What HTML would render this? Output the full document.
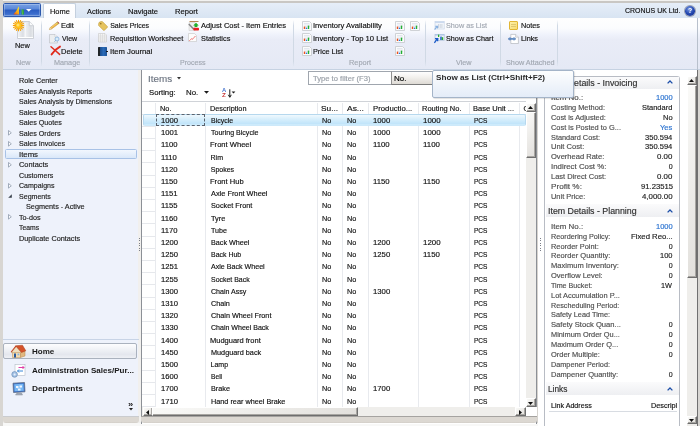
<!DOCTYPE html><html><head><meta charset="utf-8"><style>
*{margin:0;padding:0;box-sizing:border-box}
html,body{width:700px;height:426px;overflow:hidden;background:#d6d3ce;font-family:"Liberation Sans",sans-serif;position:relative}
.a{position:absolute}
svg.a{overflow:visible}
.t{position:absolute;font-size:7px;line-height:10px;white-space:nowrap;color:#111;transform-origin:0 0;filter:opacity(.999);-webkit-text-stroke:0.15px currentColor}
.g{color:#a2a8b2}
.ic-rep{position:absolute;width:10px;height:11px;border:1px solid #b4b8c0;background:linear-gradient(90deg,#fff,#eceef2);border-radius:1px}
.ic-rep i{position:absolute;bottom:1px;width:2px}
.sep{position:absolute;width:1px;background:linear-gradient(#fff0,#d0d9e5 12%,#d0d9e5 88%,#fff0)}
.btn{position:absolute;background:linear-gradient(135deg,#fafaf8,#e2e0dc);border:1px solid;border-color:#fff #6e6e6e #6e6e6e #fff;box-shadow:inset -1px -1px 0 #a8a6a2}
.trk{position:absolute;background:#efeeeb}
</style></head><body>
<div class="a" style="left:0px;top:0px;width:700px;height:1px;background:#f2f2f0"></div>
<div class="a" style="left:0px;top:1px;width:700px;height:1.5px;background:#c9c7c3"></div>
<div class="a" style="left:0px;top:0px;width:2.5px;height:426px;background:#d8d6d2"></div>
<div class="a" style="left:2.5px;top:2.5px;width:697.5px;height:15px;background:linear-gradient(#e6eef8,#d8e4f2)"></div>
<div class="a" style="left:3px;top:3.3px;width:37.8px;height:13.4px;border-radius:1.5px;background:linear-gradient(#7aa2e4,#5a88d8 42%,#2a5cc2 50%,#3a6ccc 80%,#5282d8);border:1px solid #2c58ac;box-shadow:inset 0 0 0 1px rgba(255,255,255,.25)"></div>
<svg class="a" style="left:13px;top:5.5px" width="12" height="9" viewBox="0 0 12 9"><defs><linearGradient id="sg" x1="0" y1="1" x2="0.6" y2="0"><stop offset="0" stop-color="#e83a10"/><stop offset="0.45" stop-color="#f7a012"/><stop offset="1" stop-color="#fde21a"/></linearGradient></defs><path d="M0.4 8.6 Q3.5 5 5.9 0.2 L6 8.4Z" fill="url(#sg)"/><path d="M6.9 8.4 L7.3 2 L7.7 8.4Z" fill="#3a90d8"/><path d="M8.6 8.6 L8.8 3.4 L10.8 3.6 L11 8.6Z" fill="#2ea838"/><path d="M8.8 3.4 L9.6 8.6" stroke="#7ad070" stroke-width="0.5"/></svg>
<svg class="a" style="left:26px;top:8.8px" width="6" height="3" viewBox="0 0 6 3"><path d="M0 0 H5.5 L2.75 2.8Z" fill="#fff"/></svg>
<div class="a" style="left:43px;top:3.2px;width:33.4px;height:14.6px;background:linear-gradient(#ffffff,#fbfcfe);border:1px solid #c4d0de;border-bottom:none;border-radius:2px 2px 0 0"></div>
<div class="t" style="top:6.95px;left:50.29px;transform:scaleX(1.0626);">Home</div>
<div class="t" style="top:6.95px;left:87.49px;transform:scaleX(1.0446);">Actions</div>
<div class="t" style="top:6.95px;left:128.48px;transform:scaleX(1.0882);">Navigate</div>
<div class="t" style="top:6.95px;left:175.28px;transform:scaleX(1.0841);">Report</div>
<div class="t" style="top:5.90px;left:625.15px;transform:scaleX(0.9958);">CRONUS UK Ltd.</div>
<div class="a" style="left:684.5px;top:5.5px;width:10.5px;height:10px;border-radius:50%;background:radial-gradient(circle at 42% 32%,#7a9ce4,#2448b0 50%,#162e88);box-shadow:0 0 0 1px #9aa2b4"></div><div class="t" style="top:6.01px;font-size:7.5px;font-weight:bold;-webkit-text-stroke:0;left:687.78px;transform:scaleX(0.9199);color:#fff;">?</div>
<div class="a" style="left:2.5px;top:17.5px;width:697.5px;height:52px;background:linear-gradient(#fefefe,#fbfcfe 20%,#eff2fb 33%,#e9ecf7 42%,#e5e9f5);border-bottom:1px solid #c6d2e2"></div>
<div class="a" style="left:697px;top:17.5px;width:1px;height:52px;background:#b8c0cc"></div>
<div class="sep" style="left:41.3px;top:20px;height:47px"></div>
<div class="sep" style="left:89.3px;top:20px;height:47px"></div>
<div class="sep" style="left:293.3px;top:20px;height:47px"></div>
<div class="sep" style="left:425.3px;top:20px;height:47px"></div>
<div class="sep" style="left:500.3px;top:20px;height:47px"></div>
<div class="sep" style="left:557.3px;top:20px;height:47px"></div>
<div class="a" style="left:17.7px;top:21.2px;width:16px;height:17px;background:linear-gradient(90deg,#f2f3f5,#dcdfe4 30%,#eceef1 50%,#dadde2 80%,#eef0f2);clip-path:polygon(0 0,74% 0,100% 24%,100% 100%,0 100%);box-shadow:inset 0 -1px 0 #fff"></div>
<svg class="a" style="left:17.2px;top:20.7px" width="17" height="18" viewBox="0 0 17 18"><path d="M0.5 0.5H12.3L16.5 4.7V17.5H0.5Z" fill="none" stroke="#c4c8ce" stroke-width="0.8"/><path d="M12.3 0.5V4.7H16.5" fill="#fafbfc" stroke="#c4c8ce" stroke-width="0.8"/><path d="M8.2 2V16.5" stroke="#fbfcfd" stroke-width="1"/></svg>
<svg class="a" style="left:12.8px;top:20.3px" width="11" height="11" viewBox="0 0 11 11"><g stroke="#f7a000" stroke-width="1.1" stroke-linecap="round"><path d="M5.5 0.3V10.7M0.3 5.5H10.7M1.8 1.8L9.2 9.2M9.2 1.8L1.8 9.2M3.4 0.6L7.6 10.4M7.6 0.6L3.4 10.4M0.6 3.4L10.4 7.6M0.6 7.6L10.4 3.4"/></g><circle cx="5.5" cy="5.5" r="2.9" fill="#ffc21a"/><circle cx="5" cy="5" r="1.5" fill="#ffe070"/></svg>
<div class="t" style="top:41.00px;left:15.39px;transform:scaleX(1.0561);">New</div>
<div class="t g" style="top:58.10px;left:15.90px;transform:scaleX(1.0375);">New</div>
<svg class="a" style="left:49px;top:21px" width="11" height="9" viewBox="0 0 11 9"><path d="M0.4 8.6 L1.2 6.6 L8.4 0.9 L9.9 2.5 L2.5 8 Z" fill="#f0b848" stroke="#b8842c" stroke-width="0.5"/><path d="M1.6 6.9 L8.9 1.4" stroke="#fae090" stroke-width="0.5"/><path d="M0.4 8.6 L1.2 6.6 L2.5 8Z" fill="#e8d8b8"/><path d="M8 1.2 L9.6 2.8" stroke="#48a048" stroke-width="0.7"/><path d="M8.6 0.6 L10.2 2.2" stroke="#e04868" stroke-width="1"/></svg>
<div class="t" style="top:21.05px;left:61.49px;transform:scaleX(1.0580);">Edit</div>
<svg class="a" style="left:49.3px;top:33.8px" width="11" height="9.5" viewBox="0 0 11 9.5"><path d="M0.5 0.5H6L8.5 3V9H0.5Z" fill="#eceef0" stroke="#b8bcc2" stroke-width="0.6"/><path d="M6 0.5V3H8.5" fill="#fafafa" stroke="#b8bcc2" stroke-width="0.5"/><circle cx="8" cy="5" r="2" fill="#d8ecfa" stroke="#78a8d8" stroke-width="0.7"/><path d="M6.6 6.5 L5.6 7.6" stroke="#6890c0" stroke-width="0.9"/></svg>
<div class="t" style="top:34.15px;left:62.07px;">View</div>
<svg class="a" style="left:49.6px;top:46.4px" width="11" height="9" viewBox="0 0 11 9"><path d="M1 0.8 Q4.5 3.8 9.6 8.4" stroke="#e02a1c" stroke-width="1.5" fill="none" stroke-linecap="round"/><path d="M10 0.6 Q5.5 3 1.6 8.4" stroke="#e02a1c" stroke-width="1.9" fill="none" stroke-linecap="round"/></svg>
<div class="t" style="top:46.85px;left:61.49px;transform:scaleX(1.0698);">Delete</div>
<div class="t g" style="top:58.10px;left:53.90px;transform:scaleX(1.0364);">Manage</div>
<svg class="a" style="left:98px;top:20.5px" width="10" height="9.5" viewBox="0 0 10 9.5"><path d="M0.6 3.2 Q0.6 0.6 3.2 0.6 L4.4 0.6 L9.4 5.6 Q9.7 6 9.3 6.4 L6.4 9.3 Q6 9.7 5.6 9.4 L0.6 4.4Z" fill="#e6c460" stroke="#c09a3a" stroke-width="0.6"/><circle cx="2.8" cy="2.8" r="0.8" fill="#8a6a20"/></svg>
<div class="t" style="top:21.05px;left:110.18px;">Sales Prices</div>
<svg class="a" style="left:98px;top:33px" width="9" height="9.5" viewBox="0 0 9 9.5"><path d="M0.5 0.5H7L8.5 2V9H0.5Z" fill="#f4f4f4" stroke="#c8c8c8" stroke-width="0.6"/><path d="M0.5 3H8.5M0.5 5H8.5M0.5 7H8.5M2.5 0.5V9M4.5 0.5V9M6.5 0.5V9" stroke="#d0d0d0" stroke-width="0.5"/></svg>
<div class="t" style="top:34.15px;left:109.90px;transform:scaleX(1.0475);">Requisition Worksheet</div>
<div class="a" style="left:98.2px;top:47.1px;width:8.6px;height:8.9px;background:linear-gradient(90deg,#202428 0 1.6px,#1a4a88 1.6px,#2a6ab8 60%,#1c5296);border-radius:0.5px"></div>
<div class="a" style="left:105.6px;top:50.6px;width:2px;height:1.6px;background:#1a1a1a"></div>
<div class="t" style="top:46.85px;left:109.79px;transform:scaleX(1.0988);">Item Journal</div>
<svg class="a" style="left:188.3px;top:20.5px" width="12" height="10" viewBox="0 0 12 10"><rect x="1.5" y="0" width="9" height="0.9" fill="#b07840"/><path d="M1 1.5H7V9.5H1Z" fill="#f0f0f0" stroke="#c8c8c8" stroke-width="0.5"/><path d="M0.8 3 L5.8 8.2" stroke="#888" stroke-width="1.6"/><path d="M5.2 4.6 L8 1.8 L10.8 4.6 H9.4 V6 H6.6 V4.6Z" fill="#1eb02a"/><rect x="5.4" y="6.8" width="5.6" height="2.8" rx="0.8" fill="#e82020"/></svg>
<div class="t" style="top:21.05px;left:201.49px;transform:scaleX(1.0709);">Adjust Cost - Item Entries</div>
<svg class="a" style="left:188.4px;top:33.4px" width="9" height="9" viewBox="0 0 9 9"><path d="M0.5 0.5H6.5L8.5 2.5V8.5H0.5Z" fill="#fcfcfc" stroke="#c4c4c4" stroke-width="0.6"/><path d="M1.5 7.5 L3.5 5.8 L4.5 6.2 L7.5 3" stroke="#e82828" stroke-width="0.9" stroke-dasharray="1.2 0.4" fill="none"/></svg>
<div class="t" style="top:34.15px;left:201.17px;transform:scaleX(1.0461);">Statistics</div>
<div class="t g" style="top:58.10px;left:179.92px;transform:scaleX(1.0099);">Process</div>
<svg class="a" style="left:301.8px;top:20.7px" width="10" height="10" viewBox="0 0 10 10"><path d="M0.5 0.5H7.5L9.5 2.5V9.5H0.5Z" fill="#fbfbfc" stroke="#c4c8cc" stroke-width="0.8"/><path d="M2 2.5H7.5M2 4H8M2 5.5H8" stroke="#d4dae6" stroke-width="0.6"/><rect x="1.8" y="5.6" width="1.4" height="2.4" fill="#f0501a"/><rect x="3.8" y="6.6" width="1.4" height="1.4" fill="#2a78e0"/><rect x="5.8" y="4.6" width="1.4" height="3.4" fill="#22b030"/></svg>
<svg class="a" style="left:301.8px;top:33.4px" width="10" height="10" viewBox="0 0 10 10"><path d="M0.5 0.5H7.5L9.5 2.5V9.5H0.5Z" fill="#fbfbfc" stroke="#c4c8cc" stroke-width="0.8"/><path d="M2 2.5H7.5M2 4H8M2 5.5H8" stroke="#d4dae6" stroke-width="0.6"/><rect x="1.8" y="5.6" width="1.4" height="2.4" fill="#f0501a"/><rect x="3.8" y="6.6" width="1.4" height="1.4" fill="#2a78e0"/><rect x="5.8" y="4.6" width="1.4" height="3.4" fill="#22b030"/></svg>
<svg class="a" style="left:301.8px;top:46.4px" width="10" height="10" viewBox="0 0 10 10"><path d="M0.5 0.5H7.5L9.5 2.5V9.5H0.5Z" fill="#fbfbfc" stroke="#c4c8cc" stroke-width="0.8"/><path d="M2 2.5H7.5M2 4H8M2 5.5H8" stroke="#d4dae6" stroke-width="0.6"/><rect x="1.8" y="5.6" width="1.4" height="2.4" fill="#f0501a"/><rect x="3.8" y="6.6" width="1.4" height="1.4" fill="#2a78e0"/><rect x="5.8" y="4.6" width="1.4" height="3.4" fill="#22b030"/></svg>
<svg class="a" style="left:395px;top:20.7px" width="10" height="10" viewBox="0 0 10 10"><path d="M0.5 0.5H7.5L9.5 2.5V9.5H0.5Z" fill="#fbfbfc" stroke="#c4c8cc" stroke-width="0.8"/><path d="M2 2.5H7.5M2 4H8M2 5.5H8" stroke="#d4dae6" stroke-width="0.6"/><rect x="1.8" y="5.6" width="1.4" height="2.4" fill="#f0501a"/><rect x="3.8" y="6.6" width="1.4" height="1.4" fill="#2a78e0"/><rect x="5.8" y="4.6" width="1.4" height="3.4" fill="#22b030"/></svg>
<svg class="a" style="left:409.8px;top:20.7px" width="10" height="10" viewBox="0 0 10 10"><path d="M0.5 0.5H7.5L9.5 2.5V9.5H0.5Z" fill="#fbfbfc" stroke="#c4c8cc" stroke-width="0.8"/><path d="M2 2.5H7.5M2 4H8M2 5.5H8" stroke="#d4dae6" stroke-width="0.6"/><rect x="1.8" y="5.6" width="1.4" height="2.4" fill="#f0501a"/><rect x="3.8" y="6.6" width="1.4" height="1.4" fill="#2a78e0"/><rect x="5.8" y="4.6" width="1.4" height="3.4" fill="#22b030"/></svg>
<svg class="a" style="left:395px;top:33.4px" width="10" height="10" viewBox="0 0 10 10"><path d="M0.5 0.5H7.5L9.5 2.5V9.5H0.5Z" fill="#fbfbfc" stroke="#c4c8cc" stroke-width="0.8"/><path d="M2 2.5H7.5M2 4H8M2 5.5H8" stroke="#d4dae6" stroke-width="0.6"/><rect x="1.8" y="5.6" width="1.4" height="2.4" fill="#f0501a"/><rect x="3.8" y="6.6" width="1.4" height="1.4" fill="#2a78e0"/><rect x="5.8" y="4.6" width="1.4" height="3.4" fill="#22b030"/></svg>
<svg class="a" style="left:395px;top:46.4px" width="10" height="10" viewBox="0 0 10 10"><path d="M0.5 0.5H7.5L9.5 2.5V9.5H0.5Z" fill="#fbfbfc" stroke="#c4c8cc" stroke-width="0.8"/><path d="M2 2.5H7.5M2 4H8M2 5.5H8" stroke="#d4dae6" stroke-width="0.6"/><rect x="1.8" y="5.6" width="1.4" height="2.4" fill="#f0501a"/><rect x="3.8" y="6.6" width="1.4" height="1.4" fill="#2a78e0"/><rect x="5.8" y="4.6" width="1.4" height="3.4" fill="#22b030"/></svg>
<div class="t" style="top:21.05px;left:312.80px;transform:scaleX(1.0879);">Inventory Availability</div>
<div class="t" style="top:34.15px;left:312.79px;transform:scaleX(1.0921);">Inventory - Top 10 List</div>
<div class="t" style="top:46.85px;left:312.90px;transform:scaleX(1.0405);">Price List</div>
<div class="t g" style="top:58.10px;left:349.49px;transform:scaleX(1.0547);">Report</div>
<svg class="a" style="left:434px;top:20.5px" width="11" height="9" viewBox="0 0 11 9"><rect x="1" y="0.5" width="9.2" height="7.5" fill="#f2f5fa" stroke="#c4d2e6" stroke-width="0.6"/><rect x="1" y="0.5" width="9.2" height="1.4" fill="#c8d8ee"/><path d="M4.5 3V7M6.2 3V7M7.9 3V7" stroke="#c0c8d4" stroke-width="0.7"/><path d="M0.6 8.6 L2.8 5.6 M1.2 5.2 L3.6 5.2 L3.4 7.4" stroke="#88b0e0" stroke-width="1.1" fill="none"/></svg>
<div class="t g" style="top:21.05px;left:445.77px;transform:scaleX(1.0352);">Show as List</div>
<svg class="a" style="left:434px;top:33.5px" width="11" height="9" viewBox="0 0 11 9"><rect x="1" y="0.3" width="9.2" height="6" fill="#eef2f8" stroke="#a8bcd8" stroke-width="0.6"/><rect x="1" y="0.3" width="9.2" height="1.2" fill="#a8c0e4"/><rect x="4" y="0.6" width="1.2" height="2.4" fill="#28b028"/><rect x="6.2" y="2.6" width="1.6" height="3.4" fill="#2a62c8"/><rect x="7.8" y="3.2" width="1.4" height="2.8" fill="#28b028"/><path d="M0.4 8.8 L3 5.2 M1 4.6 L3.8 4.6 L3.6 7.2" stroke="#1a5ac8" stroke-width="1.3" fill="none"/></svg>
<div class="t" style="top:34.15px;left:445.77px;transform:scaleX(1.0342);">Show as Chart</div>
<div class="t g" style="top:58.10px;left:456.47px;transform:scaleX(1.0357);">View</div>
<div class="a" style="left:508.9px;top:21px;width:9.2px;height:9.2px;border:1px solid #e2b634;background:linear-gradient(135deg,#fdf0a8,#f8dc70);border-radius:1px"></div>
<div class="a" style="left:510.6px;top:23.8px;width:5.5px;height:0.6px;background:#e0c870"></div>
<div class="a" style="left:510.6px;top:25.6px;width:5.5px;height:0.6px;background:#e0c870"></div>
<div class="t" style="top:21.05px;left:520.50px;transform:scaleX(1.0367);">Notes</div>
<svg class="a" style="left:507.8px;top:33.6px" width="11" height="10" viewBox="0 0 11 10"><path d="M2.8 0.4H7.6L10.4 3.2V9.5H2.8Z" fill="#fff" stroke="#a8acb4" stroke-width="0.6"/><path d="M7.6 0.4V3.2H10.4" fill="#f0f0f0" stroke="#a8acb4" stroke-width="0.5"/><path d="M0.6 4.9H7.4" stroke="#4a7ab8" stroke-width="1.1"/><ellipse cx="2" cy="4.9" rx="1.5" ry="1" fill="none" stroke="#4a7ab8" stroke-width="0.8"/><ellipse cx="6" cy="4.9" rx="1.5" ry="1" fill="none" stroke="#4a7ab8" stroke-width="0.8"/></svg>
<div class="t" style="top:34.15px;left:520.50px;transform:scaleX(1.0378);">Links</div>
<div class="t g" style="top:58.10px;left:505.77px;transform:scaleX(1.0385);">Show Attached</div>
<div class="a" style="left:2.5px;top:69.5px;width:138.5px;height:357px;background:#f1f0ee"></div>
<div class="a" style="left:2.5px;top:69.5px;width:135.4px;height:346.5px;background:#eef2fb"></div>
<div class="a" style="left:4.8px;top:148.9px;width:132.4px;height:9.8px;border:1px solid #a8c2e6;background:linear-gradient(#f2f7fe,#dae8f9);border-radius:1.5px"></div>
<div class="t" style="top:76.45px;color:#222;left:18.81px;transform:scaleX(1.0352);">Role Center</div>
<div class="t" style="top:86.95px;color:#222;left:19.08px;transform:scaleX(1.0216);">Sales Analysis Reports</div>
<div class="t" style="top:97.45px;color:#222;left:19.08px;">Sales Analysis by Dimensions</div>
<div class="t" style="top:107.95px;color:#222;left:19.08px;transform:scaleX(1.0085);">Sales Budgets</div>
<div class="t" style="top:118.45px;color:#222;left:19.08px;transform:scaleX(1.0180);">Sales Quotes</div>
<div class="t" style="top:128.95px;color:#222;left:19.08px;transform:scaleX(1.0167);">Sales Orders</div>
<svg class="a" style="left:8.3px;top:130.3px" width="4" height="6" viewBox="0 0 4 6"><path d="M0.5 0.5 L3.3 2.8 L0.5 5.1Z" fill="#fff" stroke="#8c98aa" stroke-width="0.8"/></svg>
<div class="t" style="top:139.35px;color:#222;left:19.08px;transform:scaleX(1.0199);">Sales Invoices</div>
<svg class="a" style="left:8.3px;top:140.70000000000002px" width="4" height="6" viewBox="0 0 4 6"><path d="M0.5 0.5 L3.3 2.8 L0.5 5.1Z" fill="#fff" stroke="#8c98aa" stroke-width="0.8"/></svg>
<div class="t" style="top:149.85px;color:#222;left:18.68px;transform:scaleX(1.1101);">Items</div>
<div class="t" style="top:160.35px;color:#222;left:19.02px;transform:scaleX(1.0586);">Contacts</div>
<svg class="a" style="left:8.3px;top:161.70000000000002px" width="4" height="6" viewBox="0 0 4 6"><path d="M0.5 0.5 L3.3 2.8 L0.5 5.1Z" fill="#fff" stroke="#8c98aa" stroke-width="0.8"/></svg>
<div class="t" style="top:170.85px;color:#222;left:19.04px;transform:scaleX(1.0141);">Customers</div>
<div class="t" style="top:181.25px;color:#222;left:19.04px;">Campaigns</div>
<svg class="a" style="left:8.3px;top:182.60000000000002px" width="4" height="6" viewBox="0 0 4 6"><path d="M0.5 0.5 L3.3 2.8 L0.5 5.1Z" fill="#fff" stroke="#8c98aa" stroke-width="0.8"/></svg>
<div class="t" style="top:191.75px;color:#222;left:19.08px;transform:scaleX(1.0082);">Segments</div>
<svg class="a" style="left:8.3px;top:193.8px" width="4" height="4" viewBox="0 0 4 4"><path d="M3.8 0.2 V3.8 H0.2Z" fill="#3a424c"/></svg>
<div class="t" style="top:202.15px;color:#222;left:25.67px;transform:scaleX(1.0397);">Segments - Active</div>
<div class="t" style="top:212.65px;color:#222;left:19.24px;transform:scaleX(1.0292);">To-dos</div>
<svg class="a" style="left:8.3px;top:214.0px" width="4" height="6" viewBox="0 0 4 6"><path d="M0.5 0.5 L3.3 2.8 L0.5 5.1Z" fill="#fff" stroke="#8c98aa" stroke-width="0.8"/></svg>
<div class="t" style="top:223.15px;color:#222;left:19.25px;transform:scaleX(0.9722);">Teams</div>
<div class="t" style="top:233.55px;color:#222;left:18.80px;transform:scaleX(1.0410);">Duplicate Contacts</div>
<div class="a" style="left:139.2px;top:238.0px;width:1.2px;height:0.9px;background:#7a7e88"></div>
<div class="a" style="left:139.2px;top:240.45px;width:1.2px;height:0.9px;background:#7a7e88"></div>
<div class="a" style="left:139.2px;top:242.9px;width:1.2px;height:0.9px;background:#7a7e88"></div>
<div class="a" style="left:139.2px;top:245.35px;width:1.2px;height:0.9px;background:#7a7e88"></div>
<div class="a" style="left:139.2px;top:247.8px;width:1.2px;height:0.9px;background:#7a7e88"></div>
<div class="a" style="left:139.2px;top:250.25px;width:1.2px;height:0.9px;background:#7a7e88"></div>
<div class="a" style="left:2.5px;top:339.2px;width:136px;height:1px;background:#c8d4e6"></div>
<div class="a" style="left:3.2px;top:343.1px;width:134.3px;height:16.2px;border:1px solid #aab2be;border-radius:2px;background:linear-gradient(#fdfdfe,#f0f2f6 40%,#e4e7ee 75%,#eef0f5)"></div>
<svg class="a" style="left:10.8px;top:344.8px" width="15" height="13" viewBox="0 0 15 13"><path d="M1.5 7 H9.5 V12.5 H1.5Z" fill="#f4dcb0" stroke="#b88a50" stroke-width="0.5"/><path d="M9.5 7 L14 5.5 V11 L9.5 12.5Z" fill="#e0b880" stroke="#b88a50" stroke-width="0.5"/><path d="M0.3 7.6 L5.5 1.2 L10.5 7.4Z" fill="#f0e0c0" stroke="#b88a50" stroke-width="0.4"/><path d="M4.5 0.8 L11.5 0.2 L14.8 5.8 L10.5 7.4 Z" fill="#d4532a" stroke="#a83c1c" stroke-width="0.5"/><path d="M0.3 7.6 L5.5 1.2 L4.5 0.8 L-0.2 6.8Z" fill="#c04020"/><rect x="3" y="8.5" width="2" height="4" fill="#2a5a9c"/><rect x="6.5" y="8.5" width="1.8" height="1.8" fill="#8ab4e0"/></svg>
<div class="t" style="top:347.00px;font-weight:bold;-webkit-text-stroke:0;color:#1a1a1a;left:31.56px;transform:scaleX(1.1472);">Home</div>
<svg class="a" style="left:11px;top:363.5px" width="17" height="14" viewBox="0 0 17 14"><rect x="4" y="0.5" width="10" height="11" fill="#fff" stroke="#b2bac6" stroke-width="0.6"/><path d="M7.5 3.5H13 M11.5 2L13 3.5L11.5 5" stroke="#e040a8" stroke-width="1" fill="none"/><path d="M12 7H6.5 M8 5.5L6.5 7L8 8.5" stroke="#3888d8" stroke-width="1" fill="none"/><circle cx="3.6" cy="10.4" r="2.8" fill="#a4c2e6" stroke="#6a8cb4" stroke-width="0.7"/><circle cx="3.6" cy="10.4" r="1" fill="#e8f0fa"/></svg>
<div class="t" style="top:365.80px;font-weight:bold;-webkit-text-stroke:0;color:#1a1a1a;left:31.90px;transform:scaleX(1.1491);">Administration Sales/Pur...</div>
<svg class="a" style="left:11.7px;top:382px" width="14" height="14" viewBox="0 0 14 14"><path d="M1 1.2 L12.5 0.5 L13 9.8 L1.5 10.5Z" fill="#3a70c8" stroke="#5a6678" stroke-width="0.7"/><path d="M2.2 2.3 L11.4 1.8 L11.8 8.8 L2.6 9.3Z" fill="#78b8f4"/><path d="M4 4 H6.5 V6 H4Z M7.5 3.5 H10 V5.5 H7.5Z M6 6.8 H8.5 V8.4 H6Z" fill="#eef6ff"/><path d="M5.2 6 L6.8 6.8 M8.6 5.5 L7.6 6.8" stroke="#fff" stroke-width="0.4"/><path d="M5 11 H9.5 L10.5 13 H3.5Z" fill="#a8b0bc" stroke="#70788a" stroke-width="0.4"/></svg>
<div class="t" style="top:383.90px;font-weight:bold;-webkit-text-stroke:0;color:#1a1a1a;left:31.54px;transform:scaleX(1.1871);">Departments</div>
<div class="t" style="top:399.80px;font-weight:bold;-webkit-text-stroke:0;color:#222;left:128.27px;transform:scaleX(1.3480);">»</div>
<svg class="a" style="left:128.5px;top:408.3px" width="4" height="3" viewBox="0 0 4 3"><path d="M0 0H4L2 2.5Z" fill="#222"/></svg>
<div class="a" style="left:2.5px;top:423px;width:697.5px;height:3px;background:#f8f8f7"></div>
<div class="a" style="left:2.5px;top:416.2px;width:136px;height:7px;background:linear-gradient(#b8c0cc,#dcd8d2 1px,#dcd8d2 85%,#cfcbc5);border-radius:0 0 3px 3px"></div>
<div class="a" style="left:141px;top:69.5px;width:396px;height:354px;background:#fff;border-left:1px solid #8c9096;border-right:1px solid #8c9096"></div>
<div class="t" style="top:73.84px;font-size:9.4px;color:#6c7480;left:148.49px;transform:scaleX(1.0517);">Items</div>
<svg class="a" style="left:176.5px;top:76.8px" width="4" height="3" viewBox="0 0 4 3"><path d="M0 0H4L2 2.6Z" fill="#333"/></svg>
<div class="t" style="top:88.30px;left:148.85px;transform:scaleX(1.1007);">Sorting:</div>
<div class="t" style="top:88.30px;left:186.45px;transform:scaleX(1.1261);">No.</div>
<svg class="a" style="left:203.6px;top:91.3px" width="5" height="3" viewBox="0 0 5 3"><path d="M0 0H5L2.5 2.8Z" fill="#1a1a1a"/></svg>
<div class="t" style="top:85.07px;font-size:5.6px;font-weight:bold;-webkit-text-stroke:0;color:#4a78d0;left:221.76px;transform:scaleX(1.0381);">A</div>
<div class="t" style="top:89.77px;font-size:5.6px;font-weight:bold;-webkit-text-stroke:0;color:#c83838;left:221.91px;transform:scaleX(1.1317);">Z</div>
<svg class="a" style="left:227.5px;top:88.8px" width="8" height="9" viewBox="0 0 8 9"><path d="M1.8 0.3V8M0.3 5.8 L1.8 8.3 L3.3 5.8" stroke="#1a1a1a" stroke-width="1" fill="none"/><path d="M3.6 2.5H7.4L5.5 4.6Z" fill="#1a1a1a"/></svg>
<div class="a" style="left:308.4px;top:71.2px;width:83.5px;height:13.4px;border:1px solid #a0a6ae;background:#fff"></div>
<div class="t" style="top:73.50px;color:#9aa0a8;left:312.73px;transform:scaleX(1.0873);">Type to filter (F3)</div>
<div class="a" style="left:391.3px;top:71.2px;width:45px;height:13.4px;border:1px solid #a0a6ae;border-left:1px solid #909090;border-bottom-color:#7a7a7a;background:linear-gradient(#fefefe,#f4f2ef 40%,#dedad4)"></div>
<div class="t" style="top:73.90px;color:#000;left:394.44px;transform:scaleX(1.1467);">No.</div>
<div class="a" style="left:142px;top:101px;width:384px;height:1.4px;background:#d0d3d8"></div>
<div class="a" style="left:142px;top:113.8px;width:384px;height:1px;background:#e2e5ea"></div>
<div class="a" style="left:155px;top:102.5px;width:1px;height:304.5px;background:#e8eaee"></div>
<div class="a" style="left:205px;top:102.5px;width:1px;height:304.5px;background:#e8eaee"></div>
<div class="a" style="left:317px;top:102.5px;width:1px;height:304.5px;background:#e8eaee"></div>
<div class="a" style="left:342px;top:102.5px;width:1px;height:304.5px;background:#e8eaee"></div>
<div class="a" style="left:368px;top:102.5px;width:1px;height:304.5px;background:#e8eaee"></div>
<div class="a" style="left:418px;top:102.5px;width:1px;height:304.5px;background:#e8eaee"></div>
<div class="a" style="left:469px;top:102.5px;width:1px;height:304.5px;background:#e8eaee"></div>
<div class="a" style="left:519px;top:102.5px;width:1px;height:304.5px;background:#e8eaee"></div>
<div class="t" style="top:104.30px;left:159.89px;transform:scaleX(1.0538);">No.</div>
<div class="t" style="top:104.30px;left:209.90px;transform:scaleX(1.0416);">Description</div>
<div class="t" style="top:104.30px;left:321.12px;transform:scaleX(1.1831);">Su...</div>
<div class="t" style="top:104.30px;left:347.18px;transform:scaleX(1.2059);">As...</div>
<div class="t" style="top:104.30px;left:372.76px;transform:scaleX(1.1084);">Productio...</div>
<div class="t" style="top:104.30px;left:422.49px;transform:scaleX(1.0685);">Routing No.</div>
<div class="t" style="top:104.30px;left:472.98px;transform:scaleX(1.0755);">Base Unit ...</div>
<div class="t" style="top:104.30px;left:523.44px;">C</div>
<div class="a" style="left:142px;top:126px;width:13px;height:1px;background:#e6e8ec"></div>
<div class="a" style="left:142px;top:138px;width:13px;height:1px;background:#e6e8ec"></div>
<div class="a" style="left:142px;top:150px;width:13px;height:1px;background:#e6e8ec"></div>
<div class="a" style="left:142px;top:162px;width:13px;height:1px;background:#e6e8ec"></div>
<div class="a" style="left:142px;top:175px;width:13px;height:1px;background:#e6e8ec"></div>
<div class="a" style="left:142px;top:187px;width:13px;height:1px;background:#e6e8ec"></div>
<div class="a" style="left:142px;top:199px;width:13px;height:1px;background:#e6e8ec"></div>
<div class="a" style="left:142px;top:211px;width:13px;height:1px;background:#e6e8ec"></div>
<div class="a" style="left:142px;top:223px;width:13px;height:1px;background:#e6e8ec"></div>
<div class="a" style="left:142px;top:236px;width:13px;height:1px;background:#e6e8ec"></div>
<div class="a" style="left:142px;top:248px;width:13px;height:1px;background:#e6e8ec"></div>
<div class="a" style="left:142px;top:260px;width:13px;height:1px;background:#e6e8ec"></div>
<div class="a" style="left:142px;top:272px;width:13px;height:1px;background:#e6e8ec"></div>
<div class="a" style="left:142px;top:284px;width:13px;height:1px;background:#e6e8ec"></div>
<div class="a" style="left:142px;top:297px;width:13px;height:1px;background:#e6e8ec"></div>
<div class="a" style="left:142px;top:309px;width:13px;height:1px;background:#e6e8ec"></div>
<div class="a" style="left:142px;top:321px;width:13px;height:1px;background:#e6e8ec"></div>
<div class="a" style="left:142px;top:333px;width:13px;height:1px;background:#e6e8ec"></div>
<div class="a" style="left:142px;top:345px;width:13px;height:1px;background:#e6e8ec"></div>
<div class="a" style="left:142px;top:358px;width:13px;height:1px;background:#e6e8ec"></div>
<div class="a" style="left:142px;top:370px;width:13px;height:1px;background:#e6e8ec"></div>
<div class="a" style="left:142px;top:382px;width:13px;height:1px;background:#e6e8ec"></div>
<div class="a" style="left:142px;top:394px;width:13px;height:1px;background:#e6e8ec"></div>
<div class="a" style="left:142px;top:406px;width:13px;height:1px;background:#e6e8ec"></div>
<div class="a" style="left:143.3px;top:114px;width:383px;height:12.2px;background:linear-gradient(#f0f9fe,#d8effc 40%,#c2e5fa 85%,#d2edfc);border:1px solid #b6d8ee;border-bottom-color:#cde9fa;border-radius:2px"></div>
<div class="a" style="left:156px;top:114px;width:49.3px;height:12.2px;border:1px dashed #5a626e"></div>
<div class="t" style="top:115.90px;left:160.62px;transform:scaleX(1.0904);">1000</div>
<div class="t" style="top:115.90px;left:210.53px;transform:scaleX(0.9959);">Bicycle</div>
<div class="t" style="top:115.90px;left:321.70px;transform:scaleX(1.0396);">No</div>
<div class="t" style="top:115.90px;left:346.80px;transform:scaleX(1.0396);">No</div>
<div class="t" style="top:115.90px;left:372.81px;transform:scaleX(1.1039);">1000</div>
<div class="t" style="top:115.90px;left:422.70px;transform:scaleX(1.1242);">1000</div>
<div class="t" style="top:115.90px;left:473.56px;transform:scaleX(0.9335);">PCS</div>
<div class="t" style="top:128.10px;left:160.62px;transform:scaleX(1.0954);">1001</div>
<div class="t" style="top:128.10px;left:210.94px;transform:scaleX(1.0067);">Touring Bicycle</div>
<div class="t" style="top:128.10px;left:321.70px;transform:scaleX(1.0396);">No</div>
<div class="t" style="top:128.10px;left:346.80px;transform:scaleX(1.0396);">No</div>
<div class="t" style="top:128.10px;left:372.81px;transform:scaleX(1.1039);">1000</div>
<div class="t" style="top:128.10px;left:422.70px;transform:scaleX(1.1242);">1000</div>
<div class="t" style="top:128.10px;left:473.56px;transform:scaleX(0.9335);">PCS</div>
<div class="t" style="top:140.30px;left:160.62px;transform:scaleX(1.0904);">1100</div>
<div class="t" style="top:140.30px;left:210.48px;transform:scaleX(1.0814);">Front Wheel</div>
<div class="t" style="top:140.30px;left:321.70px;transform:scaleX(1.0396);">No</div>
<div class="t" style="top:140.30px;left:346.80px;transform:scaleX(1.0396);">No</div>
<div class="t" style="top:140.30px;left:372.81px;transform:scaleX(1.1039);">1100</div>
<div class="t" style="top:140.30px;left:422.70px;transform:scaleX(1.1242);">1100</div>
<div class="t" style="top:140.30px;left:473.56px;transform:scaleX(0.9335);">PCS</div>
<div class="t" style="top:152.50px;left:160.62px;transform:scaleX(1.0904);">1110</div>
<div class="t" style="top:152.50px;left:210.53px;">Rim</div>
<div class="t" style="top:152.50px;left:321.70px;transform:scaleX(1.0396);">No</div>
<div class="t" style="top:152.50px;left:346.80px;transform:scaleX(1.0396);">No</div>
<div class="t" style="top:152.50px;left:473.56px;transform:scaleX(0.9335);">PCS</div>
<div class="t" style="top:164.70px;left:160.62px;transform:scaleX(1.0904);">1120</div>
<div class="t" style="top:164.70px;left:210.78px;">Spokes</div>
<div class="t" style="top:164.70px;left:321.70px;transform:scaleX(1.0396);">No</div>
<div class="t" style="top:164.70px;left:346.80px;transform:scaleX(1.0396);">No</div>
<div class="t" style="top:164.70px;left:473.56px;transform:scaleX(0.9335);">PCS</div>
<div class="t" style="top:176.90px;left:160.62px;transform:scaleX(1.0904);">1150</div>
<div class="t" style="top:176.90px;left:210.48px;transform:scaleX(1.0808);">Front Hub</div>
<div class="t" style="top:176.90px;left:321.70px;transform:scaleX(1.0396);">No</div>
<div class="t" style="top:176.90px;left:346.80px;transform:scaleX(1.0396);">No</div>
<div class="t" style="top:176.90px;left:372.81px;transform:scaleX(1.1039);">1150</div>
<div class="t" style="top:176.90px;left:422.70px;transform:scaleX(1.1242);">1150</div>
<div class="t" style="top:176.90px;left:473.56px;transform:scaleX(0.9335);">PCS</div>
<div class="t" style="top:189.10px;left:160.62px;transform:scaleX(1.0954);">1151</div>
<div class="t" style="top:189.10px;left:211.09px;transform:scaleX(1.0526);">Axle Front Wheel</div>
<div class="t" style="top:189.10px;left:321.70px;transform:scaleX(1.0396);">No</div>
<div class="t" style="top:189.10px;left:346.80px;transform:scaleX(1.0396);">No</div>
<div class="t" style="top:189.10px;left:473.56px;transform:scaleX(0.9335);">PCS</div>
<div class="t" style="top:201.30px;left:160.62px;transform:scaleX(1.0919);">1155</div>
<div class="t" style="top:201.30px;left:210.77px;transform:scaleX(1.0404);">Socket Front</div>
<div class="t" style="top:201.30px;left:321.70px;transform:scaleX(1.0396);">No</div>
<div class="t" style="top:201.30px;left:346.80px;transform:scaleX(1.0396);">No</div>
<div class="t" style="top:201.30px;left:473.56px;transform:scaleX(0.9335);">PCS</div>
<div class="t" style="top:213.50px;left:160.62px;transform:scaleX(1.0904);">1160</div>
<div class="t" style="top:213.50px;left:210.94px;transform:scaleX(1.0494);">Tyre</div>
<div class="t" style="top:213.50px;left:321.70px;transform:scaleX(1.0396);">No</div>
<div class="t" style="top:213.50px;left:346.80px;transform:scaleX(1.0396);">No</div>
<div class="t" style="top:213.50px;left:473.56px;transform:scaleX(0.9335);">PCS</div>
<div class="t" style="top:225.70px;left:160.62px;transform:scaleX(1.0904);">1170</div>
<div class="t" style="top:225.70px;left:210.94px;transform:scaleX(1.0138);">Tube</div>
<div class="t" style="top:225.70px;left:321.70px;transform:scaleX(1.0396);">No</div>
<div class="t" style="top:225.70px;left:346.80px;transform:scaleX(1.0396);">No</div>
<div class="t" style="top:225.70px;left:473.56px;transform:scaleX(0.9335);">PCS</div>
<div class="t" style="top:237.90px;left:160.62px;transform:scaleX(1.0904);">1200</div>
<div class="t" style="top:237.90px;left:210.51px;transform:scaleX(1.0301);">Back Wheel</div>
<div class="t" style="top:237.90px;left:321.70px;transform:scaleX(1.0396);">No</div>
<div class="t" style="top:237.90px;left:346.80px;transform:scaleX(1.0396);">No</div>
<div class="t" style="top:237.90px;left:372.81px;transform:scaleX(1.1039);">1200</div>
<div class="t" style="top:237.90px;left:422.70px;transform:scaleX(1.1242);">1200</div>
<div class="t" style="top:237.90px;left:473.56px;transform:scaleX(0.9335);">PCS</div>
<div class="t" style="top:250.10px;left:160.62px;transform:scaleX(1.0904);">1250</div>
<div class="t" style="top:250.10px;left:210.53px;transform:scaleX(0.9939);">Back Hub</div>
<div class="t" style="top:250.10px;left:321.70px;transform:scaleX(1.0396);">No</div>
<div class="t" style="top:250.10px;left:346.80px;transform:scaleX(1.0396);">No</div>
<div class="t" style="top:250.10px;left:372.81px;transform:scaleX(1.1039);">1250</div>
<div class="t" style="top:250.10px;left:422.70px;transform:scaleX(1.1242);">1150</div>
<div class="t" style="top:250.10px;left:473.56px;transform:scaleX(0.9335);">PCS</div>
<div class="t" style="top:262.30px;left:160.62px;transform:scaleX(1.0954);">1251</div>
<div class="t" style="top:262.30px;left:211.09px;transform:scaleX(1.0147);">Axle Back Wheel</div>
<div class="t" style="top:262.30px;left:321.70px;transform:scaleX(1.0396);">No</div>
<div class="t" style="top:262.30px;left:346.80px;transform:scaleX(1.0396);">No</div>
<div class="t" style="top:262.30px;left:473.56px;transform:scaleX(0.9335);">PCS</div>
<div class="t" style="top:274.50px;left:160.62px;transform:scaleX(1.0919);">1255</div>
<div class="t" style="top:274.50px;left:210.78px;transform:scaleX(0.9948);">Socket Back</div>
<div class="t" style="top:274.50px;left:321.70px;transform:scaleX(1.0396);">No</div>
<div class="t" style="top:274.50px;left:346.80px;transform:scaleX(1.0396);">No</div>
<div class="t" style="top:274.50px;left:473.56px;transform:scaleX(0.9335);">PCS</div>
<div class="t" style="top:286.70px;left:160.62px;transform:scaleX(1.0904);">1300</div>
<div class="t" style="top:286.70px;left:210.74px;transform:scaleX(1.0104);">Chain Assy</div>
<div class="t" style="top:286.70px;left:321.70px;transform:scaleX(1.0396);">No</div>
<div class="t" style="top:286.70px;left:346.80px;transform:scaleX(1.0396);">No</div>
<div class="t" style="top:286.70px;left:372.81px;transform:scaleX(1.1039);">1300</div>
<div class="t" style="top:286.70px;left:473.56px;transform:scaleX(0.9335);">PCS</div>
<div class="t" style="top:298.90px;left:160.62px;transform:scaleX(1.0904);">1310</div>
<div class="t" style="top:298.90px;left:210.73px;transform:scaleX(1.0298);">Chain</div>
<div class="t" style="top:298.90px;left:321.70px;transform:scaleX(1.0396);">No</div>
<div class="t" style="top:298.90px;left:346.80px;transform:scaleX(1.0396);">No</div>
<div class="t" style="top:298.90px;left:473.56px;transform:scaleX(0.9335);">PCS</div>
<div class="t" style="top:311.10px;left:160.62px;transform:scaleX(1.0904);">1320</div>
<div class="t" style="top:311.10px;left:210.73px;transform:scaleX(1.0353);">Chain Wheel Front</div>
<div class="t" style="top:311.10px;left:321.70px;transform:scaleX(1.0396);">No</div>
<div class="t" style="top:311.10px;left:346.80px;transform:scaleX(1.0396);">No</div>
<div class="t" style="top:311.10px;left:473.56px;transform:scaleX(0.9335);">PCS</div>
<div class="t" style="top:323.30px;left:160.62px;transform:scaleX(1.0904);">1330</div>
<div class="t" style="top:323.30px;left:210.74px;transform:scaleX(1.0046);">Chain Wheel Back</div>
<div class="t" style="top:323.30px;left:321.70px;transform:scaleX(1.0396);">No</div>
<div class="t" style="top:323.30px;left:346.80px;transform:scaleX(1.0396);">No</div>
<div class="t" style="top:323.30px;left:473.56px;transform:scaleX(0.9335);">PCS</div>
<div class="t" style="top:335.50px;left:160.62px;transform:scaleX(1.0904);">1400</div>
<div class="t" style="top:335.50px;left:210.49px;transform:scaleX(1.0694);">Mudguard front</div>
<div class="t" style="top:335.50px;left:321.70px;transform:scaleX(1.0396);">No</div>
<div class="t" style="top:335.50px;left:346.80px;transform:scaleX(1.0396);">No</div>
<div class="t" style="top:335.50px;left:473.56px;transform:scaleX(0.9335);">PCS</div>
<div class="t" style="top:347.70px;left:160.62px;transform:scaleX(1.0904);">1450</div>
<div class="t" style="top:347.70px;left:210.50px;transform:scaleX(1.0401);">Mudguard back</div>
<div class="t" style="top:347.70px;left:321.70px;transform:scaleX(1.0396);">No</div>
<div class="t" style="top:347.70px;left:346.80px;transform:scaleX(1.0396);">No</div>
<div class="t" style="top:347.70px;left:473.56px;transform:scaleX(0.9335);">PCS</div>
<div class="t" style="top:359.90px;left:160.62px;transform:scaleX(1.0904);">1500</div>
<div class="t" style="top:359.90px;left:210.53px;">Lamp</div>
<div class="t" style="top:359.90px;left:321.70px;transform:scaleX(1.0396);">No</div>
<div class="t" style="top:359.90px;left:346.80px;transform:scaleX(1.0396);">No</div>
<div class="t" style="top:359.90px;left:473.56px;transform:scaleX(0.9335);">PCS</div>
<div class="t" style="top:372.10px;left:160.62px;transform:scaleX(1.0904);">1600</div>
<div class="t" style="top:372.10px;left:210.55px;transform:scaleX(0.9502);">Bell</div>
<div class="t" style="top:372.10px;left:321.70px;transform:scaleX(1.0396);">No</div>
<div class="t" style="top:372.10px;left:346.80px;transform:scaleX(1.0396);">No</div>
<div class="t" style="top:372.10px;left:473.56px;transform:scaleX(0.9335);">PCS</div>
<div class="t" style="top:384.30px;left:160.62px;transform:scaleX(1.0904);">1700</div>
<div class="t" style="top:384.30px;left:210.51px;transform:scaleX(1.0344);">Brake</div>
<div class="t" style="top:384.30px;left:321.70px;transform:scaleX(1.0396);">No</div>
<div class="t" style="top:384.30px;left:346.80px;transform:scaleX(1.0396);">No</div>
<div class="t" style="top:384.30px;left:372.81px;transform:scaleX(1.1039);">1700</div>
<div class="t" style="top:384.30px;left:473.56px;transform:scaleX(0.9335);">PCS</div>
<div class="t" style="top:396.50px;left:160.62px;transform:scaleX(1.0904);">1710</div>
<div class="t" style="top:396.50px;left:210.50px;transform:scaleX(1.0395);">Hand rear wheel Brake</div>
<div class="t" style="top:396.50px;left:321.70px;transform:scaleX(1.0396);">No</div>
<div class="t" style="top:396.50px;left:346.80px;transform:scaleX(1.0396);">No</div>
<div class="t" style="top:396.50px;left:473.56px;transform:scaleX(0.9335);">PCS</div>
<div class="trk" style="left:525.5px;top:102.5px;width:10.5px;height:305px"></div>
<div class="btn" style="left:525.5px;top:103px;width:10.5px;height:8.5px"></div>
<svg class="a" style="left:528.3px;top:106px" width="5" height="3" viewBox="0 0 5 3"><path d="M0 3H5L2.5 0Z" fill="#111"/></svg>
<div class="btn" style="left:525.5px;top:111.5px;width:10.5px;height:46px"></div>
<div class="btn" style="left:525.5px;top:398px;width:10.5px;height:9px"></div>
<svg class="a" style="left:528.3px;top:401.5px" width="5" height="3" viewBox="0 0 5 3"><path d="M0 0H5L2.5 3Z" fill="#111"/></svg>
<div class="trk" style="left:142px;top:407.3px;width:384px;height:9px"></div>
<div class="btn" style="left:142.5px;top:407.3px;width:10px;height:9px"></div>
<svg class="a" style="left:146px;top:409.5px" width="3" height="5" viewBox="0 0 3 5"><path d="M3 0V5L0 2.5Z" fill="#111"/></svg>
<div class="btn" style="left:152.3px;top:407.3px;width:206px;height:9px"></div>
<div class="btn" style="left:515px;top:407.3px;width:10.5px;height:9px"></div>
<svg class="a" style="left:519px;top:409.5px" width="3" height="5" viewBox="0 0 3 5"><path d="M0 0V5L3 2.5Z" fill="#111"/></svg>
<div class="a" style="left:526px;top:407.3px;width:11px;height:9px;background:#fff"></div>
<div class="a" style="left:141px;top:416.3px;width:396px;height:7px;background:linear-gradient(#6e6e6e,#dcd8d2 1px,#dcd8d2 85%,#cfcbc5);border-radius:0 0 3px 3px"></div>
<div class="a" style="left:538px;top:69.5px;width:162px;height:357px;background:#fff"></div>
<div class="a" style="left:544.3px;top:75.5px;width:135.5px;height:351px;background:#fff;border:1px solid #b8bcc4;border-bottom:none;border-radius:3px 3px 0 0"></div>
<div class="a" style="left:540.2px;top:238.0px;width:1px;height:0.9px;background:#7a7e88"></div>
<div class="a" style="left:540.2px;top:240.45px;width:1px;height:0.9px;background:#7a7e88"></div>
<div class="a" style="left:540.2px;top:242.9px;width:1px;height:0.9px;background:#7a7e88"></div>
<div class="a" style="left:540.2px;top:245.35px;width:1px;height:0.9px;background:#7a7e88"></div>
<div class="a" style="left:540.2px;top:247.8px;width:1px;height:0.9px;background:#7a7e88"></div>
<div class="a" style="left:540.2px;top:250.25px;width:1px;height:0.9px;background:#7a7e88"></div>
<div class="a" style="left:546px;top:76.5px;width:133px;height:12.599999999999994px;background:linear-gradient(#fbfbfc,#eeeff2)"></div>
<div class="t" style="top:78.13px;font-size:8.6px;color:#2e2e2e;left:548.18px;transform:scaleX(1.0287);">Item Details - Invoicing</div>
<svg class="a" style="left:666.5px;top:80.39999999999999px" width="6" height="4" viewBox="0 0 6 4"><path d="M0.6 3.4 L3 1 L5.4 3.4" stroke="#1c4ea8" stroke-width="1.3" fill="none"/></svg>
<div class="t" style="top:93.10px;color:#4e4e4e;left:550.57px;transform:scaleX(1.1324);">Item No.:</div>
<div class="t" style="top:93.10px;color:#2a72d0;left:655.93px;transform:scaleX(1.0701);">1000</div>
<div class="t" style="top:102.96px;color:#4e4e4e;left:550.92px;transform:scaleX(1.0585);">Costing Method:</div>
<div class="t" style="top:102.96px;color:#222;left:642.46px;transform:scaleX(1.0673);">Standard</div>
<div class="t" style="top:112.82px;color:#4e4e4e;left:550.93px;transform:scaleX(1.0518);">Cost is Adjusted:</div>
<div class="t" style="top:112.82px;color:#222;left:662.98px;transform:scaleX(1.0767);">No</div>
<div class="t" style="top:122.68px;color:#4e4e4e;left:550.92px;transform:scaleX(1.0577);">Cost is Posted to G...</div>
<div class="t" style="top:122.68px;color:#2a72d0;left:659.53px;transform:scaleX(1.0811);">Yes</div>
<div class="t" style="top:132.54px;color:#4e4e4e;left:550.97px;transform:scaleX(1.0495);">Standard Cost:</div>
<div class="t" style="top:132.54px;color:#222;left:645.21px;transform:scaleX(1.0793);">350.594</div>
<div class="t" style="top:142.40px;color:#4e4e4e;left:550.72px;transform:scaleX(1.0828);">Unit Cost:</div>
<div class="t" style="top:142.40px;color:#222;left:645.21px;transform:scaleX(1.0793);">350.594</div>
<div class="t" style="top:152.26px;color:#4e4e4e;left:550.94px;transform:scaleX(1.0775);">Overhead Rate:</div>
<div class="t" style="top:152.26px;color:#222;left:657.29px;transform:scaleX(1.1241);">0.00</div>
<div class="t" style="top:162.12px;color:#4e4e4e;left:550.58px;transform:scaleX(1.1201);">Indirect Cost %:</div>
<div class="t" style="top:162.12px;color:#222;left:668.68px;">0</div>
<div class="t" style="top:171.98px;color:#4e4e4e;left:550.69px;transform:scaleX(1.0668);">Last Direct Cost:</div>
<div class="t" style="top:171.98px;color:#222;left:657.29px;transform:scaleX(1.1241);">0.00</div>
<div class="t" style="top:181.84px;color:#4e4e4e;left:550.63px;transform:scaleX(1.1689);">Profit %:</div>
<div class="t" style="top:181.84px;color:#222;left:640.64px;transform:scaleX(1.0954);">91.23515</div>
<div class="t" style="top:191.70px;color:#4e4e4e;left:550.73px;transform:scaleX(1.0609);">Unit Price:</div>
<div class="t" style="top:191.70px;color:#222;left:642.12px;transform:scaleX(1.1188);">4,000.00</div>
<div class="a" style="left:545.8px;top:204.2px;width:133px;height:1px;background:#dde1e6"></div>
<div class="a" style="left:546px;top:203.8px;width:133px;height:13.5px;background:linear-gradient(#fbfbfc,#eeeff2)"></div>
<div class="t" style="top:206.33px;font-size:8.6px;color:#2e2e2e;left:548.19px;transform:scaleX(1.0250);">Item Details - Planning</div>
<svg class="a" style="left:666.5px;top:208.60000000000002px" width="6" height="4" viewBox="0 0 6 4"><path d="M0.6 3.4 L3 1 L5.4 3.4" stroke="#1c4ea8" stroke-width="1.3" fill="none"/></svg>
<div class="t" style="top:221.80px;color:#4e4e4e;left:550.57px;transform:scaleX(1.1324);">Item No.:</div>
<div class="t" style="top:221.80px;color:#2a72d0;left:655.93px;transform:scaleX(1.0701);">1000</div>
<div class="t" style="top:231.65px;color:#4e4e4e;left:550.70px;transform:scaleX(1.0379);">Reordering Policy:</div>
<div class="t" style="top:231.65px;color:#222;left:631.26px;transform:scaleX(1.1061);">Fixed Reo...</div>
<div class="t" style="top:241.50px;color:#4e4e4e;left:550.69px;transform:scaleX(1.0564);">Reorder Point:</div>
<div class="t" style="top:241.50px;color:#222;left:668.68px;">0</div>
<div class="t" style="top:251.35px;color:#4e4e4e;left:550.68px;transform:scaleX(1.0752);">Reorder Quantity:</div>
<div class="t" style="top:251.35px;color:#222;left:660.13px;transform:scaleX(1.0669);">100</div>
<div class="t" style="top:261.20px;color:#4e4e4e;left:550.68px;transform:scaleX(1.0776);">Maximum Inventory:</div>
<div class="t" style="top:261.20px;color:#222;left:668.68px;">0</div>
<div class="t" style="top:271.05px;color:#4e4e4e;left:550.95px;transform:scaleX(1.0704);">Overflow Level:</div>
<div class="t" style="top:271.05px;color:#222;left:668.68px;">0</div>
<div class="t" style="top:280.90px;color:#4e4e4e;left:551.14px;transform:scaleX(1.0188);">Time Bucket:</div>
<div class="t" style="top:280.90px;color:#222;left:661.34px;transform:scaleX(1.0460);">1W</div>
<div class="t" style="top:290.75px;color:#4e4e4e;left:550.69px;transform:scaleX(1.0611);">Lot Accumulation P...</div>
<div class="t" style="top:300.60px;color:#4e4e4e;left:550.71px;transform:scaleX(1.0271);">Rescheduling Period:</div>
<div class="t" style="top:310.45px;color:#4e4e4e;left:550.97px;transform:scaleX(1.0457);">Safety Lead Time:</div>
<div class="t" style="top:320.30px;color:#4e4e4e;left:550.95px;transform:scaleX(1.0895);">Safety Stock Quan...</div>
<div class="t" style="top:320.30px;color:#222;left:668.68px;">0</div>
<div class="t" style="top:330.15px;color:#4e4e4e;left:550.70px;transform:scaleX(1.0525);">Minimum Order Qu...</div>
<div class="t" style="top:330.15px;color:#222;left:668.68px;">0</div>
<div class="t" style="top:340.00px;color:#4e4e4e;left:550.69px;transform:scaleX(1.0598);">Maximum Order Q...</div>
<div class="t" style="top:340.00px;color:#222;left:668.68px;">0</div>
<div class="t" style="top:349.85px;color:#4e4e4e;left:550.95px;transform:scaleX(1.0638);">Order Multiple:</div>
<div class="t" style="top:349.85px;color:#222;left:668.68px;">0</div>
<div class="t" style="top:359.70px;color:#4e4e4e;left:550.70px;transform:scaleX(1.0379);">Dampener Period:</div>
<div class="t" style="top:369.55px;color:#4e4e4e;left:550.68px;transform:scaleX(1.0728);">Dampener Quantity:</div>
<div class="t" style="top:369.55px;color:#222;left:668.68px;">0</div>
<div class="a" style="left:545.8px;top:382.5px;width:133px;height:1px;background:#dde1e6"></div>
<div class="a" style="left:546px;top:381.8px;width:133px;height:13.5px;background:linear-gradient(#fbfbfc,#eeeff2)"></div>
<div class="t" style="top:384.33px;font-size:8.6px;color:#2e2e2e;left:548.32px;transform:scaleX(0.9654);">Links</div>
<svg class="a" style="left:666.5px;top:386.6px" width="6" height="4" viewBox="0 0 6 4"><path d="M0.6 3.4 L3 1 L5.4 3.4" stroke="#1c4ea8" stroke-width="1.3" fill="none"/></svg>
<div class="t" style="top:400.70px;left:551.32px;transform:scaleX(1.0167);">Link Address</div>
<div class="t" style="top:400.70px;left:650.51px;transform:scaleX(1.0355);">Descripl</div>
<div class="a" style="left:549px;top:410.5px;width:128px;height:1px;background:#d8dce2"></div>
<div class="trk" style="left:686.5px;top:75.5px;width:10px;height:350.5px"></div>
<div class="btn" style="left:686.5px;top:75.6px;width:10px;height:9px"></div>
<svg class="a" style="left:689px;top:78.8px" width="5" height="3" viewBox="0 0 5 3"><path d="M0 3H5L2.5 0Z" fill="#111"/></svg>
<div class="btn" style="left:686.5px;top:84.6px;width:10px;height:193.5px"></div>
<div class="btn" style="left:686.5px;top:415.8px;width:10px;height:8px"></div>
<svg class="a" style="left:689px;top:418.6px" width="5" height="3" viewBox="0 0 5 3"><path d="M0 0H5L2.5 3Z" fill="#111"/></svg>
<div class="a" style="left:696.5px;top:69.5px;width:1.5px;height:357px;background:#707070"></div>
<div class="a" style="left:698px;top:69.5px;width:2px;height:357px;background:#d8d6d2"></div>
<div class="a" style="left:431.6px;top:69.8px;width:142px;height:28.4px;background:linear-gradient(#fdfefe,#e4ecf8);border:1px solid #a4b4c8;border-radius:2px;box-shadow:1px 1px 1px rgba(0,0,0,.12)"></div>
<div class="t" style="top:73.00px;font-weight:bold;-webkit-text-stroke:0;color:#2a2a2a;left:435.66px;transform:scaleX(1.1671);">Show as List (Ctrl+Shift+F2)</div>
</body></html>
